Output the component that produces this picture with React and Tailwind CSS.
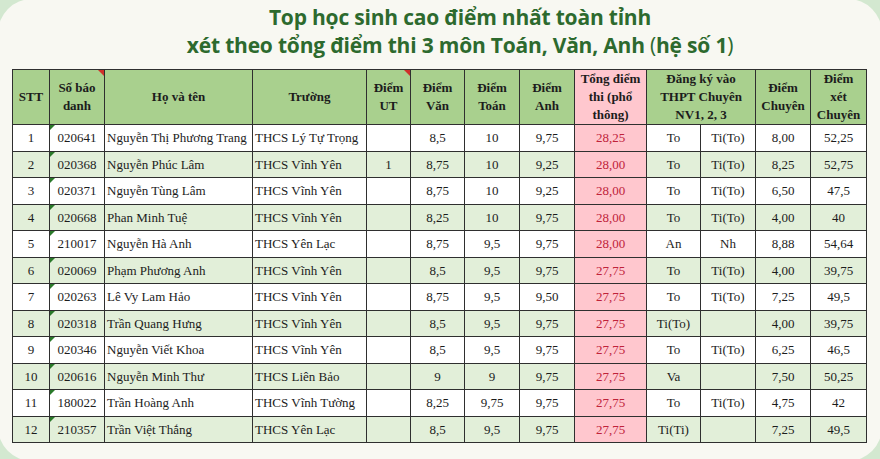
const COLS = [37, 55, 148, 114, 44, 54, 55, 55, 72, 54, 55, 55, 56]

const ROWS = [
  ['1', '020641', 'Nguyễn Thị Phương Trang', 'THCS Lý Tự Trọng', '', '8,5', '10', '9,75', '28,25', 'To', 'Ti(To)', '8,00', '52,25'],
  ['2', '020368', 'Nguyễn Phúc Lâm', 'THCS Vĩnh Yên', '1', '8,75', '10', '9,25', '28,00', 'To', 'Ti(To)', '8,25', '52,75'],
  ['3', '020371', 'Nguyễn Tùng Lâm', 'THCS Vĩnh Yên', '', '8,75', '10', '9,25', '28,00', 'To', 'Ti(To)', '6,50', '47,5'],
  ['4', '020668', 'Phan Minh Tuệ', 'THCS Vĩnh Yên', '', '8,25', '10', '9,75', '28,00', 'To', 'Ti(To)', '4,00', '40'],
  ['5', '210017', 'Nguyễn Hà Anh', 'THCS Yên Lạc', '', '8,75', '9,5', '9,75', '28,00', 'An', 'Nh', '8,88', '54,64'],
  ['6', '020069', 'Phạm Phương Anh', 'THCS Vĩnh Yên', '', '8,5', '9,5', '9,75', '27,75', 'To', 'Ti(To)', '4,00', '39,75'],
  ['7', '020263', 'Lê Vy Lam Hảo', 'THCS Vĩnh Yên', '', '8,75', '9,5', '9,50', '27,75', 'To', 'Ti(To)', '7,25', '49,5'],
  ['8', '020318', 'Trần Quang Hưng', 'THCS Vĩnh Yên', '', '8,5', '9,5', '9,75', '27,75', 'Ti(To)', '', '4,00', '39,75'],
  ['9', '020346', 'Nguyễn Viết Khoa', 'THCS Vĩnh Yên', '', '8,5', '9,5', '9,75', '27,75', 'To', 'Ti(To)', '6,25', '46,5'],
  ['10', '020616', 'Nguyễn Minh Thư', 'THCS Liên Bảo', '', '9', '9', '9,75', '27,75', 'Va', '', '7,50', '50,25'],
  ['11', '180022', 'Trần Hoàng Anh', 'THCS Vĩnh Tường', '', '8,25', '9,75', '9,75', '27,75', 'To', 'Ti(To)', '4,75', '42'],
  ['12', '210357', 'Trần Việt Thắng', 'THCS Yên Lạc', '', '8,5', '9,5', '9,75', '27,75', 'Ti(Ti)', '', '7,25', '49,5'],
]

function Corner({ color, side }) {
  // tiny comment marker triangle, like the spreadsheet's
  const pts = side === 'right' ? '0,0 6,0 6,6' : '0,0 5,0 0,5'
  return (
    <svg width="6" height="6" viewBox="0 0 6 6"
      className={`absolute top-0 ${side === 'right' ? 'right-0' : 'left-0'}`}>
      <polygon points={pts} fill={color} />
    </svg>
  )
}

const serif = 'font-[Liberation_Serif,Times_New_Roman,DejaVu_Serif,serif]'
const th = `border border-[#2f2f2f] bg-[#a9d08e] font-bold text-center align-middle leading-[18px] px-0.5 ${serif}`
const td = `border border-[#2f2f2f] align-middle whitespace-nowrap ${serif}`

export default function App() {
  return (
    <div className="w-[880px] h-[459px] overflow-hidden bg-[#d3e8d0]">
      <div className="w-[884px] h-[462px] -mt-px -ml-[2px] rounded-[34px] bg-[#f8f8f2] pt-[4px]">
        <div className="ml-[40px] text-center text-[#2d6a2e] text-[21px] leading-[28px] font-bold tracking-[-0.2px] font-['Open_Sans',sans-serif]">
          <div>Top học sinh cao điểm nhất toàn tỉnh</div>
          <div>xét theo tổng điểm thi 3 môn Toán, Văn, Anh <span className="font-normal">(</span>hệ số 1<span className="font-normal">)</span></div>
        </div>

        <table className="ml-[14px] mt-[10px] table-fixed border-collapse text-[13px] text-[#1c1c1c] w-[854px]"
          style={{ fontFamily: '"Liberation Serif", "Times New Roman", serif' }}>
          <colgroup>
            {COLS.map((w, i) => <col key={i} style={{ width: w }} />)}
          </colgroup>
          <thead>
            <tr className="h-[55px]">
              <th className={th}>STT</th>
              <th className={`${th} relative`}>Số báo<br />danh<Corner color="#d0302a" side="right" /></th>
              <th className={th}>Họ và tên</th>
              <th className={th}>Trường</th>
              <th className={`${th} relative`}>Điểm<br />UT<Corner color="#d0302a" side="right" /></th>
              <th className={th}>Điểm<br />Văn</th>
              <th className={th}>Điểm<br />Toán</th>
              <th className={th}>Điểm<br />Anh</th>
              <th className={`${th} !bg-[#ffc7ce]`}>Tổng điểm<br />thi (phổ<br />thông)</th>
              <th className={th} colSpan={2}>Đăng ký vào<br />THPT Chuyên<br />NV1, 2, 3</th>
              <th className={th}>Điểm<br />Chuyên</th>
              <th className={th}>Điểm<br />xét<br />Chuyên</th>
            </tr>
          </thead>
          <tbody>
            {ROWS.map((r, i) => (
              <tr key={r[0]} className={`h-[26.5px] ${i % 2 ? 'bg-[#e2efd9]' : 'bg-white'}`}>
                {r.map((c, j) => {
                  if (j === 1) return (
                    <td key={j} className={`${td} relative text-center`}>
                      {c}<Corner color="#2a7a2a" side="left" />
                    </td>
                  )
                  if (j === 2 || j === 3) return <td key={j} className={`${td} text-left pl-[2px]`}>{c}</td>
                  if (j === 8) return <td key={j} className={`${td} text-center bg-[#ffc7ce] text-[#c0223a]`}>{c}</td>
                  return <td key={j} className={`${td} text-center`}>{c}</td>
                })}
              </tr>
            ))}
          </tbody>
        </table>
      </div>
    </div>
  )
}
